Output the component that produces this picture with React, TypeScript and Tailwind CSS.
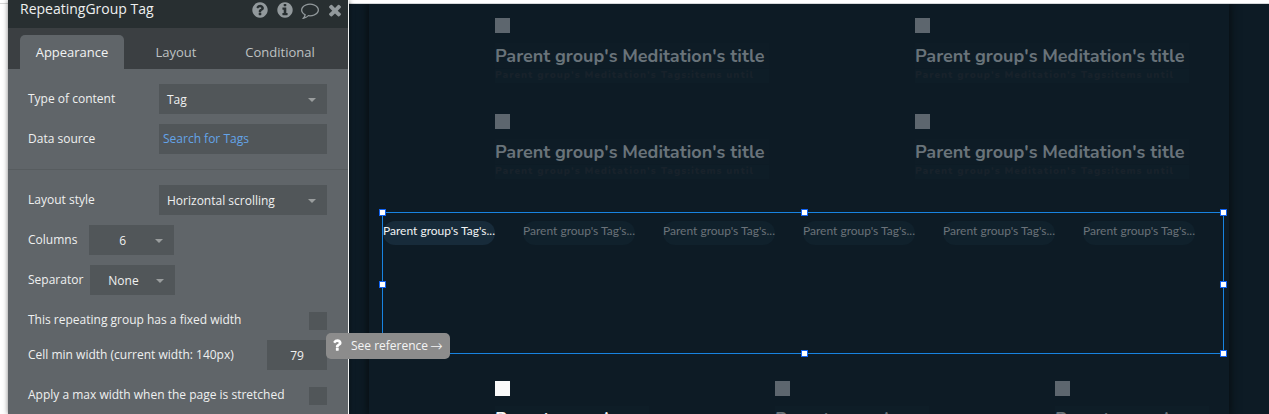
import type { ReactNode } from "react";

const CIRCLE =
  "M1664 896q0 209-103 385.5t-279.5 279.5-385.5 103-385.5-103-279.5-279.5-103-385.5 103-385.5 279.5-279.5 385.5-103 385.5 103 279.5 279.5 103 385.5z";
const ICONS = {
  help:
    "M1024 1376v-192q0-14-9-23t-23-9h-192q-14 0-23 9t-9 23v192q0 14 9 23t23 9h192q14 0 23-9t9-23zm256-672q0-88-55.5-163t-138.5-116-170-41q-243 0-371 213-15 24 8 42l132 100q7 6 19 6 16 0 25-12 53-68 86-92 34-24 86-24 48 0 85.5 26t37.5 59q0 38-20 61t-68 45q-63 28-115.5 86.5t-52.5 125.5v36q0 14 9 23t23 9h192q14 0 23-9t9-23q0-19 21.5-49.5t54.5-49.5q32-18 49-28.5t46-35 44.5-48 28-60.5 12.5-81zm384 192q0 209-103 385.5t-279.5 279.5-385.5 103-385.5-103-279.5-279.5-103-385.5 103-385.5 279.5-279.5 385.5-103 385.5 103 279.5 279.5 103 385.5z",
  info:
    "M1152 1376v-160q0-14-9-23t-23-9h-96v-512q0-14-9-23t-23-9h-320q-14 0-23 9t-9 23v160q0 14 9 23t23 9h96v320h-96q-14 0-23 9t-9 23v160q0 14 9 23t23 9h448q14 0 23-9t9-23zm-128-896v-160q0-14-9-23t-23-9h-192q-14 0-23 9t-9 23v160q0 14 9 23t23 9h192q14 0 23-9t9-23z" +
    CIRCLE,
  comment:
    "M896 384q-204 0-381.5 69.5t-282 187.5-104.5 255q0 112 71.5 213.5t201.5 175.5l87 50-27 96q-24 91-70 172 152-63 275-171l43-38 57 6q69 8 130 8 204 0 381.5-69.5t282-187.5 104.5-255-104.5-255-282-187.5-381.5-69.5zm896 512q0 174-120 321.5t-326 233-450 85.5q-70 0-145-8-198 175-460 242-49 14-114 22h-5q-15 0-27-10.5t-16-27.5v-1q-3-4-.5-12t2-10 4.5-9.5l6-9 7-8.5 8-9q7-8 31-34.5t34.5-38 31-39.5 32.5-51 27-59 26-76q-157-89-247.5-220t-90.5-281q0-174 120-321.5t326-233 450-85.5 450 85.5 326 233 120 321.5z",
  close:
    "M1490 1322q0 40-28 68l-136 136q-28 28-68 28t-68-28l-294-294-294 294q-28 28-68 28t-68-28l-136-136q-28-28-28-68t28-68l294-294-294-294q-28-28-28-68t28-68l136-136q28-28 68-28t68 28l294 294 294-294q28-28 68-28t68 28l136 136q28 28 28 68t-28 68l-294 294 294 294q28 28 28 68z",
  question:
    "M1088 1256v240q0 16-12 28t-28 12h-240q-16 0-28-12t-12-28v-240q0-16 12-28t28-12h240q16 0 28 12t12 28zm316-600q0 54-15.5 101t-35 76.5-55 59.5-57.5 43.5-61 35.5q-41 23-68.5 65t-27.5 67q0 17-12 32.5t-28 15.5h-240q-15 0-25.5-18.5t-10.5-37.5v-45q0-83 65-156.5t143-108.5q59-27 84-56t25-76q0-42-46.5-74t-107.5-32q-65 0-108 29-35 25-107 115-13 16-31 16-12 0-25-8l-164-125q-13-10-15.5-25t5.5-28q160-266 464-266 80 0 161 31t146 83 106 127.5 41 158.5z",
};

function Icon({ name, className }: { name: keyof typeof ICONS; className: string }) {
  return (
    <svg viewBox="0 0 1792 1792" className={className} fill="currentColor" fillRule="evenodd">
      <path d={ICONS[name]} />
    </svg>
  );
}

function Caret() {
  return (
    <svg viewBox="0 0 8 4" className="h-1 w-2 shrink-0" fill="#9a9d9e">
      <path d="M0 0h8L4 4z" />
    </svg>
  );
}

function Row({ label, children, className }: { label: string; children: ReactNode; className: string }) {
  return (
    <div className={`flex pr-[21px] pl-5 ${className}`}>
      <span className="mt-1.5 whitespace-nowrap leading-[18px]">{label}</span>
      {children}
    </div>
  );
}

function Dropdown({ value, className }: { value: string; className: string }) {
  return (
    <div className={`flex h-[30px] shrink-0 items-center justify-between bg-[#515659] pt-0.5 pr-[11px] ${className}`}>
      <span>{value}</span>
      <Caret />
    </div>
  );
}

function Meditation() {
  return (
    <div className="flex h-24 w-[420px] flex-col items-start">
      <div className="size-[15px] bg-[#5d666e]" />
      <div className="mt-2.5 h-[25px] w-[274px] whitespace-nowrap bg-[#0e1c26] pt-px font-[Nunito,Lato,sans-serif] text-[18px] leading-[25px] font-bold tracking-[-0.02px] text-[#69737a]">
        Parent group's Meditation's title
      </div>
      <div className="mt-px h-[14px] w-[274px] whitespace-nowrap bg-[#0e1d27] font-[Nunito,Lato,sans-serif] text-[10px] leading-[12px] font-black tracking-[1px] text-[#18222b]">
        Parent group's Meditation's Tags:items until
      </div>
    </div>
  );
}

function Handle({ className }: { className: string }) {
  return <div className={`absolute size-[7px] border border-[#1263f1] bg-white ${className}`} />;
}

const handles = [
  "-left-1 -top-1",
  "left-[418px] -top-1",
  "-right-1 -top-1",
  "-left-1 top-[68px]",
  "-right-1 top-[68px]",
  "left-[418px] -bottom-1",
  "-right-1 -bottom-1",
];

export default function App() {
  return (
    <div className="relative flex h-[414px] w-[1269px] overflow-hidden bg-white">
      <div className="h-1 w-2 shrink-0 border-b border-[#d5d5d5]" />
      <aside className="z-10 flex h-[414px] w-[341px] shrink-0 flex-col border-r border-[#f0f2f2] bg-[#606569] font-['Open_Sans',sans-serif] text-[12px] text-[#eff0f0] shadow-[0_0_5px_rgba(0,0,0,0.5)]">
        <header className="flex h-7 shrink-0 items-start bg-[#282f31] pl-3">
          <h1 className="w-[231px] text-[14px] leading-[18px] text-[#eef0f0]">RepeatingGroup Tag</h1>
          <div className="flex gap-[7.1px] pt-[0.5px] text-[#92999c]">
            <Icon name="help" className="size-[18px]" />
            <Icon name="info" className="size-[18px]" />
            <Icon name="comment" className="size-[18px]" />
            <Icon name="close" className="size-[18px]" />
          </div>
        </header>
        <nav className="flex h-[41px] shrink-0 items-end bg-[#3b3f42] pl-3 text-[13px] text-[#bfc2c3]">
          <div className="flex h-[34px] w-[104px] items-center justify-center rounded-t-[5px] bg-[#606569] pt-0.5 text-[#f2f3f3]">Appearance</div>
          <div className="flex h-[34px] w-[104px] items-center justify-center pt-0.5">Layout</div>
          <div className="flex h-[34px] w-[104px] items-center justify-center pt-0.5">Conditional</div>
        </nav>
        <Row label="Type of content" className="mt-[15px] h-10 justify-between">
          <Dropdown value="Tag" className="w-[168px] pl-2" />
        </Row>
        <Row label="Data source" className="h-[45px] justify-between">
          <div className="flex h-[30px] w-[168px] items-center bg-[#515659] pl-1 text-[#64a4e8]">Search for Tags</div>
        </Row>
        <div className="h-px shrink-0 bg-[#575c5f]" />
        <Row label="Layout style" className="mt-[15px] h-10 justify-between">
          <Dropdown value="Horizontal scrolling" className="w-[168px] pl-2" />
        </Row>
        <Row label="Columns" className="h-10 gap-3">
          <Dropdown value="6" className="w-[85px] pl-[30px]" />
        </Row>
        <Row label="Separator" className="h-10 gap-[7px]">
          <Dropdown value="None" className="w-[85px] pl-[18px]" />
        </Row>
        <Row label="This repeating group has a fixed width" className="h-[35px] justify-between">
          <div className="mt-[7px] size-[18px] bg-[#515659]" />
        </Row>
        <Row label="Cell min width (current width: 140px)" className="h-10 justify-between">
          <div className="flex h-[30px] w-[60px] items-center justify-center bg-[#515659] pt-0.5">79</div>
        </Row>
        <Row label="Apply a max width when the page is stretched" className="h-[33px] justify-between">
          <div className="mt-[7px] size-[18px] bg-[#515659]" />
        </Row>
      </aside>

      <main className="flex h-[414px] w-[920px] shrink-0 flex-col">
        <div className="h-1 shrink-0 border-b border-[#d5d8da]" />
        <div className="flex h-[410px] overflow-hidden bg-[#0d1b25] pl-5">
          <div className="relative w-[860px] shrink-0 bg-[#0d1b25] pt-3.5 shadow-[0_0_8px_2px_rgba(8,13,17,0.9)]">
            <section className="flex h-[194px] flex-wrap content-start overflow-hidden pl-[126px]">
              <div className="flex w-[840px] shrink-0 flex-wrap">
                <Meditation />
                <Meditation />
                <Meditation />
                <Meditation />
              </div>
            </section>
            <section className="relative ml-[13px] flex h-[142px] w-[842px] gap-7 border border-[#1883e0] pt-2">
              {[0, 1, 2, 3, 4, 5].map((i) => (
                <div
                  key={i}
                  className={`h-6 w-28 shrink-0 rounded-full whitespace-nowrap font-[Lato,sans-serif] text-[12px] leading-5 ${
                    i === 0 ? "bg-[#172b3a] text-[#f1f3f4]" : "bg-[#10212c] text-[#6a7279]"
                  }`}
                >
                  Parent group's Tag's...
                </div>
              ))}
              {handles.map((position) => (
                <Handle key={position} className={position} />
              ))}
            </section>
            <section className="mt-[27px] flex pl-[126px]">
              {[0, 1, 2].map((i) => (
                <div key={i} className={`w-[280px] shrink-0 ${i === 0 ? "text-[#f7f8f8]" : "text-[#69737a]"}`}>
                  <div className={`size-[15px] ${i === 0 ? "bg-[#fafafa]" : "bg-[#5d666e]"}`} />
                  <div className="mt-[10px] w-[154px] bg-[#0e1d27] pt-px whitespace-nowrap font-[Nunito,Lato,sans-serif] text-[18px] leading-[25px] font-bold tracking-[-0.02px]">
                    Parent group's
                  </div>
                </div>
              ))}
            </section>
          </div>
        </div>
      </main>

      <div className="absolute top-[333px] left-[326px] z-20 flex h-[26px] w-[124px] items-center rounded-[5px] bg-[#8c8c8c] pl-[3px] font-['Open_Sans',sans-serif] text-[12px] whitespace-nowrap text-[#f4f4f4]">
        <Icon name="question" className="mr-1.5 mb-0.5 size-4 shrink-0 text-white" />
        <span>See reference</span>
        <span className="ml-0.5 font-['DejaVu_Sans',sans-serif] text-[15px] leading-4 font-extralight">→</span>
      </div>
    </div>
  );
}
